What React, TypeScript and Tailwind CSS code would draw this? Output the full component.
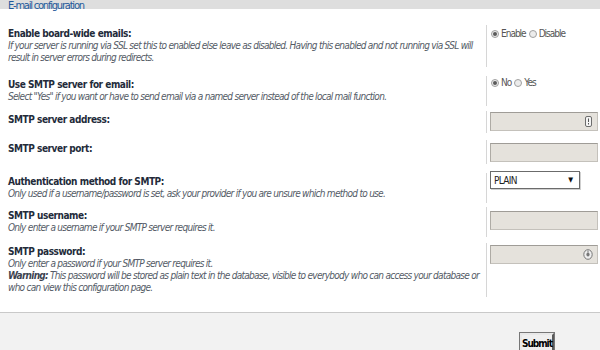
import React from "react";

const F = "font-['DejaVu_Sans_Condensed','DejaVu_Sans',sans-serif]";

function Radio({ checked }: { checked?: boolean }) {
  return (
    <span className="inline-flex h-[8px] w-[8px] items-center justify-center rounded-full border border-[#a0a0a0] bg-[#ececec]">
      {checked && <span className="h-[4px] w-[4px] rounded-full bg-[#5a5a5a]" />}
    </span>
  );
}

function Label({ children }: { children: React.ReactNode }) {
  return (
    <div className="text-[10px] font-bold leading-[12px] tracking-[-0.45px] text-[#232b3a]">{children}</div>
  );
}

function Desc({ children }: { children: React.ReactNode }) {
  return (
    <div className="whitespace-nowrap text-[10px] italic leading-[12px] tracking-[-0.72px] text-[#545b66]">{children}</div>
  );
}

function Row({
  className,
  left,
  right,
  rightPad = "pt-[3px]",
}: {
  className: string;
  left: React.ReactNode;
  right: React.ReactNode;
  rightPad?: string;
}) {
  return (
    <div className={`flex ${className}`}>
      <div className="w-[486px] shrink-0 pb-[3px] pl-2 pt-[3px]">{left}</div>
      <div className={`flex-1 border-l border-[#d6d6d6] pl-[4px] ${rightPad}`}>{right}</div>
    </div>
  );
}

function TextInput({ icon }: { icon?: "key" | "circle" }) {
  return (
    <div className="relative -ml-[1px] h-[19px] w-[108px] border border-[#c4c1bb] border-t-[#9f9c97] border-l-[#aeaba5] bg-[#e5e2dc]">
      {icon === "key" && (
        <svg className="absolute right-[5px] top-[3px]" width="7" height="11" viewBox="0 0 7 11">
          <rect x="0.5" y="0.5" width="6" height="10" rx="1.5" fill="#f4f4f4" stroke="#6d6d6d" />
          <rect x="3" y="2.5" width="1" height="3.5" fill="#555" />
          <rect x="3" y="7" width="1" height="1.5" fill="#555" />
        </svg>
      )}
      {icon === "circle" && (
        <svg className="absolute right-[4px] top-[3px]" width="10" height="11" viewBox="0 0 10 11">
          <ellipse cx="5" cy="5.5" rx="4.2" ry="4.8" fill="#eeeeee" stroke="#777" />
          <ellipse cx="5" cy="5.5" rx="1.6" ry="2" fill="#777" />
          <rect x="4.5" y="1.5" width="1" height="2" fill="#777" />
        </svg>
      )}
    </div>
  );
}

export default function App() {
  return (
    <div className={`relative h-[350px] w-[600px] overflow-hidden bg-[#f2f2f2] ${F}`}>
      <div className="h-[313px] border-b border-[#c9c9c9] bg-white">
        <div className="h-[9px] bg-[#dedede]">
          <div className="relative pl-2 text-[11px] leading-[11px] tracking-[-1.2px] text-[#1f5a9c]">
            E-mail configuration
          </div>
        </div>

        <Row
          className="mt-[16px]"
          left={
            <>
              <Label>Enable board-wide emails:</Label>
              <Desc>
                If your server is running via SSL set this to enabled else leave as disabled. Having this enabled and
                not running via SSL will
              </Desc>
              <Desc>result in server errors during redirects.</Desc>
            </>
          }
          right={
            <div className="flex items-center gap-[2px] text-[10px] leading-[12px] tracking-[-1px] text-[#555]">
              <Radio checked />
              <span className="mr-[1px]">Enable</span>
              <Radio />
              <span>Disable</span>
            </div>
          }
        />

        <Row
          className="mt-[9px]"
          left={
            <>
              <Label>Use SMTP server for email:</Label>
              <Desc>
                Select "Yes" if you want or have to send email via a named server instead of the local mail function.
              </Desc>
            </>
          }
          right={
            <div className="-mt-[2px] flex items-center gap-[2px] text-[10px] leading-[12px] tracking-[-1px] text-[#555]">
              <Radio checked />
              <span className="mr-[1px]">No</span>
              <Radio />
              <span>Yes</span>
            </div>
          }
        />

        <Row
          className="mt-[5px]"
          rightPad="pt-[1px] pb-[2px]"
          left={<Label>SMTP server address:</Label>}
          right={<TextInput icon="key" />}
        />

        <Row
          className="mt-[7px]"
          rightPad="pt-[3px] pb-[2px]"
          left={<Label>SMTP server port:</Label>}
          right={<TextInput />}
        />

        <Row
          className="mt-[9px]"
          rightPad="pt-0"
          left={
            <>
              <Label>Authentication method for SMTP:</Label>
              <Desc>Only used if a username/password is set, ask your provider if you are unsure which method to use.</Desc>
            </>
          }
          right={
            <div className="-ml-[1px] -mt-[2px] flex h-[18px] w-[90px] items-center justify-between border border-[#6b6b6b] bg-white pl-[3px] pr-[6px] shadow-[1px_1px_0_#cfcfcf]">
              <span className="text-[10px] tracking-[-0.7px] text-[#222]">PLAIN</span>
              <span className="text-[7px] text-[#111]">▼</span>
            </div>
          }
        />

        <Row
          className="mt-[4px]"
          rightPad="pt-[4px]"
          left={
            <>
              <Label>SMTP username:</Label>
              <Desc>Only enter a username if your SMTP server requires it.</Desc>
            </>
          }
          right={<TextInput />}
        />

        <Row
          className="mt-[6px]"
          rightPad="pt-[2px]"
          left={
            <>
              <Label>SMTP password:</Label>
              <Desc>Only enter a password if your SMTP server requires it.</Desc>
              <Desc>
                <b className="text-[#3d4350]">Warning:</b> This password will be stored as plain text in the database,
                visible to everybody who can access your database or
              </Desc>
              <Desc>who can view this configuration page.</Desc>
            </>
          }
          right={<TextInput icon="circle" />}
        />
      </div>

      <div className="flex justify-end pr-[46px] pt-[20px]">
        <button className="h-[22px] border-2 border-[#e8e8e8] border-b-[#5a5a5a] border-r-[#5a5a5a] bg-[#efefef] px-0 text-[10px] font-bold leading-[14px] tracking-[-1px] text-black outline outline-1 outline-[#777]">
          Submit
        </button>
      </div>
    </div>
  );
}
